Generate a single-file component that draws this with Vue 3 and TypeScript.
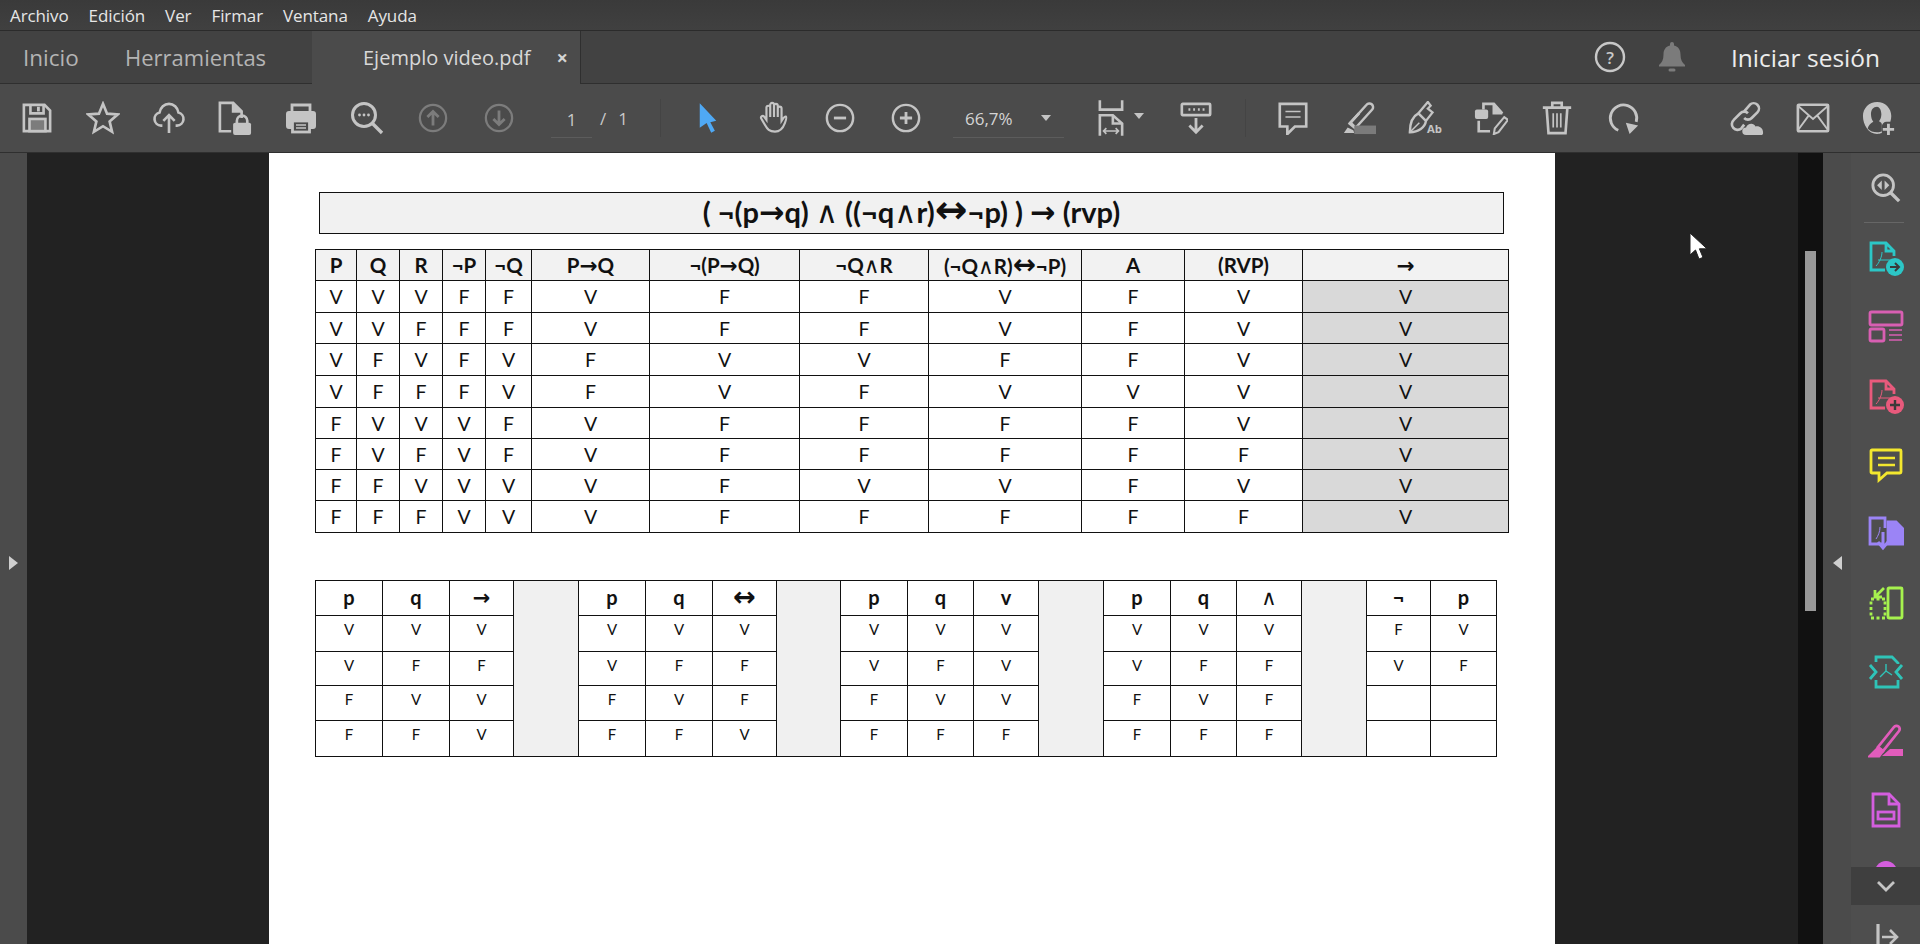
<script setup lang="ts">
const menus: string[] = ['Archivo', 'Edición', 'Ver', 'Firmar', 'Ventana', 'Ayuda']

interface Token { text: string; kind: string }
function tokens(s: string): Token[] {
  return s.split(/([→↔∧])/).filter((t) => t !== '').map((t) => ({
    text: t,
    kind: t === '∧' ? 'sym-and' : t === '→' ? 'sym-arrow' : t === '↔' ? 'sym-both' : 'plain'
  }))
}

const formula = '( ¬(p→q) ∧ ((¬q∧r)↔¬p) ) → (rvp)'

interface MainRow { cells: string[]; short: boolean }
const mainHead: string[] = ['P', 'Q', 'R', '¬P', '¬Q', 'P→Q', '¬(P→Q)', '¬Q∧R', '(¬Q∧R)↔¬P)', 'A', '(RVP)', '→']
const mainWidths: number[] = [41, 43, 43, 43, 46, 118, 150, 129, 153, 103, 118, 206]
const mainRows: MainRow[] = [
  { cells: 'V V V F F V F F V F V V'.split(' '), short: false },
  { cells: 'V V F F F V F F V F V V'.split(' '), short: true },
  { cells: 'V F V F V F V V F F V V'.split(' '), short: false },
  { cells: 'V F F F V F V F V V V V'.split(' '), short: false },
  { cells: 'F V V V F V F F F F V V'.split(' '), short: true },
  { cells: 'F V F V F V F F F F F V'.split(' '), short: true },
  { cells: 'F F V V V V F V V F V V'.split(' '), short: true },
  { cells: 'F F F V V V F F F F F V'.split(' '), short: false }
]

interface MiniTable { head: string[]; rows: string[][] }
const miniTables: MiniTable[] = [
  { head: ['p', 'q', '→'], rows: [['V', 'V', 'V'], ['V', 'F', 'F'], ['F', 'V', 'V'], ['F', 'F', 'V']] },
  { head: ['p', 'q', '↔'], rows: [['V', 'V', 'V'], ['V', 'F', 'F'], ['F', 'V', 'F'], ['F', 'F', 'V']] },
  { head: ['p', 'q', 'v'], rows: [['V', 'V', 'V'], ['V', 'F', 'V'], ['F', 'V', 'V'], ['F', 'F', 'F']] },
  { head: ['p', 'q', '∧'], rows: [['V', 'V', 'V'], ['V', 'F', 'F'], ['F', 'V', 'F'], ['F', 'F', 'F']] },
  { head: ['¬', 'p'], rows: [['F', 'V'], ['V', 'F'], ['', ''], ['', '']] }
]
const miniWidths: number[] = [67, 67, 64, 65, 67, 67, 64, 64, 67, 66, 65, 65, 67, 66, 65, 65, 64, 66]
const miniHeights: number[] = [36, 34, 35, 36]

function miniRow(i: number): string[] {
  const out: string[] = []
  miniTables.forEach((t) => out.push(...t.rows[i]))
  return out
}
</script>

<template>
  <div class="app">
    <header class="menubar">
      <span v-for="m in menus" :key="m" class="menu-item">{{ m }}</span>
    </header>

    <nav class="tabbar">
      <span class="tab-link tab-inicio">Inicio</span>
      <span class="tab-link tab-tools">Herramientas</span>
      <div class="tab-active">
        <span class="tab-title">Ejemplo video.pdf</span>
        <span class="tab-close">×</span>
      </div>
      <div class="tab-right">
        <svg class="help" viewBox="0 0 32 32" width="32" height="32">
          <circle cx="16" cy="16" r="14" fill="none" stroke="#c8c8c8" stroke-width="2.4" />
          <text x="16" y="22.5" text-anchor="middle" class="qmark">?</text>
        </svg>
        <svg class="bell" viewBox="0 0 28 32" width="28" height="32">
          <path d="M14 1a2 2 0 0 1 2 2v1.500c4.500 1 6.500 4.500 6.500 9 0 5 1.500 8 4.500 10.500v1.500H1v-1.500c3-2.500 4.500-5.500 4.500-10.500 0-4.500 2-8 6.500-9V3a2 2 0 0 1 2-2z" fill="#7b7b7b" />
          <rect x="10.500" y="27.500" width="7" height="3" rx="1.500" fill="#7b7b7b" />
        </svg>
        <span class="signin">Iniciar sesión</span>
      </div>
    </nav>

    <div class="toolbar">
      <div class="tool-group group-a">
        <span class="slot"><svg viewBox="0 0 32 32" class="ic"><path d="M2 2h22l6 6v22H2z" /><path d="M9 2v9h14V2" /><rect x="16" y="4" width="3" height="5" fill="#c4c4c4" stroke="none" /><rect x="8" y="17" width="17" height="13" fill="#7c7c7c" stroke="#c4c4c4" /></svg></span>
        <span class="slot"><svg viewBox="0 0 36 36" class="ic ic-l"><path d="M18 3l4.300 10.400 11.200.9-8.500 7.300 2.600 11L18 26.700 8.400 32.600l2.600-11-8.500-7.300 11.200-.9z" /></svg></span>
        <span class="slot"><svg viewBox="0 0 36 36" class="ic ic-l"><path d="M11 26H9.500a7 7 0 0 1-1.500-13.800C9 7 13 3 18 3s9 4 10 9.200A7 7 0 0 1 26.500 26H25" /><path d="M18 34V15M12 21l6-6 6 6" /></svg></span>
        <span class="slot"><svg viewBox="0 0 36 36" class="ic ic-l"><path d="M14 32H2V2h14l9 9v7" /><path d="M16 2v9h9" fill="#c4c4c4" /><rect x="16" y="23" width="19" height="13" rx="2" fill="#c4c4c4" stroke="none" /><path d="M20 24v-3a5.500 5.500 0 0 1 11 0v3" /></svg></span>
        <span class="slot"><svg viewBox="0 0 34 32" class="ic ic-l"><path d="M8 10V3h18v7" /><path d="M5 9h24a3 3 0 0 1 3 3v12a3 3 0 0 1-3 3h-3v-7H8v7H5a3 3 0 0 1-3-3V12a3 3 0 0 1 3-3z" fill="#c4c4c4" stroke="none" /><rect x="8.500" y="19" width="17" height="11" fill="none" /><path d="M12 23h10M12 26h10" stroke-width="1.600" /></svg></span>
        <span class="slot"><svg viewBox="0 0 34 34" class="ic ic-l"><circle cx="14" cy="14" r="11.500" stroke-width="3" /><path d="M22.500 22.500L32 32" stroke-width="3.400" /><circle cx="9.500" cy="14" r="1.400" fill="#c4c4c4" stroke="none" /><circle cx="14" cy="14" r="1.400" fill="#c4c4c4" stroke="none" /><circle cx="18.500" cy="14" r="1.400" fill="#c4c4c4" stroke="none" /></svg></span>
        <span class="slot"><svg viewBox="0 0 32 32" class="ic dim"><circle cx="16" cy="16" r="14" stroke-width="2.400" /><path d="M16 24V9M10 15l6-6 6 6" stroke-width="3" /></svg></span>
        <span class="slot"><svg viewBox="0 0 32 32" class="ic dim"><circle cx="16" cy="16" r="14" stroke-width="2.400" /><path d="M16 8v15M10 17l6 6 6-6" stroke-width="3" /></svg></span>
      </div>

      <div class="pager">
        <span class="page-input">1</span>
        <span class="page-slash">/</span>
        <span class="page-total">1</span>
      </div>
      <span class="vsep sep-one"></span>

      <div class="tool-group group-b">
        <span class="slot"><svg viewBox="0 0 24 34" class="arrow-cur"><path d="M3 1l18 19-6.500 1.500 5 9.500-4 2-5-10.500-7.500 5z" fill="#4fa9f5" /></svg></span>
        <span class="slot"><svg viewBox="0 0 34 36" class="ic ic-l hand"><path d="M10 21V8a2 2 0 0 1 4 0v10V5a2 2 0 0 1 4 0v13V6a2 2 0 0 1 4 0v12V9a2 2 0 0 1 4 0v13c2-3 3-5 4.500-4.500 1 .5.500 3-1 7-2 5.500-5 9-10.500 9-6 0-8-2.500-10.500-7l-4-7c-1-2 1.500-3.500 3-2z" transform="translate(-1 -1)" /></svg></span>
        <span class="slot"><svg viewBox="0 0 32 32" class="ic"><circle cx="16" cy="16" r="14" stroke-width="2.600" /><path d="M9.500 16h13" stroke-width="3" /></svg></span>
        <span class="slot"><svg viewBox="0 0 32 32" class="ic"><circle cx="16" cy="16" r="14" stroke-width="2.600" /><path d="M9.500 16h13M16 9.500v13" stroke-width="3" /></svg></span>
      </div>

      <div class="zoombox">
        <span class="zoom-val">66,7%</span>
        <span class="caret zoom-caret"></span>
      </div>

      <span class="slot slot-fit"><svg viewBox="0 0 28 38" class="fit"><path d="M2 0v10h24V0" /><path d="M2 38V16h14l10 9v13" /><path d="M16 16v9h10" /><path d="M6 33h16M9 30l-3 3 3 3M19 30l3 3-3 3" stroke-width="1.800" /></svg></span>
      <span class="caret fit-caret"></span>
      <span class="slot slot-read"><svg viewBox="0 0 34 36" class="ic ic-l"><rect x="2" y="3" width="30" height="12" rx="1" stroke-width="2.800" /><path d="M9 9h2M14 9h2M19 9h2M24 9h2" stroke-width="2.600" /><path d="M17 18v15M10 26l7 7 7-7" stroke-width="3" /></svg></span>
      <span class="vsep sep-two"></span>

      <div class="tool-group group-c">
        <span class="slot"><svg viewBox="0 0 34 36" class="ic ic-l"><path d="M3 3h28v24H19l-8 8v-8H3z" stroke-width="2.800" /><path d="M9 11h16M9 17h16" stroke-width="1.600" /></svg></span>
        <span class="slot"><svg viewBox="0 0 36 36" class="ic ic-l"><path d="M8 24L26 4a3 3 0 0 1 6 5L14 29z" stroke-width="2.600" /><path d="M9 23l5 5" /><path d="M2 34l4-6 6 3 1 3z" fill="#c4c4c4" stroke="none" /><rect x="13" y="26" width="23" height="9" fill="#7b7b7b" stroke="none" /><path d="M8 24L18 13" /></svg></span>
        <span class="slot"><svg viewBox="0 0 36 36" class="ic ic-l"><path d="M2 33c0-10 3-17 9-20l8 8c-1 7-8 12-17 12z" stroke-width="2.600" /><path d="M2 33l10-10" stroke-width="1.600" /><path d="M11 13L21 1l3 4-3 3 5 4-7 9" stroke-width="2.400" /><text x="20" y="34" class="mini-txt">Ab</text></svg></span>
        <span class="slot"><svg viewBox="0 0 36 36" class="ic ic-l"><path d="M5 21v11h12" /><path d="M10 9V3h11l9 10" /><path d="M21 3v10h9" fill="#c4c4c4" /><rect x="1" y="9" width="14" height="10" rx="2" fill="#c4c4c4" stroke="none" /><path d="M21 35l1-6 10-12 4 3-10 13z" stroke-width="2.200" /></svg></span>
        <span class="slot"><svg viewBox="0 0 32 36" class="ic ic-l"><path d="M1 7h30M11 7V2h10v5M5 7l2 27h18l2-27" stroke-width="2.800" /><path d="M12 13v15M16 13v15M20 13v15" stroke-width="1.800" /></svg></span>
        <span class="slot"><svg viewBox="0 0 34 36" class="ic ic-l"><path d="M12 31A14 14 0 1 1 31 22" stroke-width="3" /><path d="M20 23l13 3-9 9z" fill="#c4c4c4" stroke="none" /></svg></span>
      </div>

      <div class="tool-group group-d">
        <span class="slot"><svg viewBox="0 0 36 36" class="ic ic-l"><path d="M15 11l6-7a5.500 5.500 0 0 1 8 8l-6 6a5.500 5.500 0 0 1-8 0" stroke-width="2.800" /><path d="M19 13a5.500 5.500 0 0 0-8 0l-7 7a5.500 5.500 0 0 0 8 9l3-4" stroke-width="2.800" /><path d="M17 36a4 4 0 0 1 0-8c1-4 8-6 10-1 4-1 8 2 8 6a3 3 0 0 1-1 3z" fill="#c4c4c4" stroke="none" /></svg></span>
        <span class="slot"><svg viewBox="0 0 36 32" class="ic ic-l"><rect x="2" y="2" width="32" height="28" rx="1" stroke-width="2.800" /><path d="M2 3l16 14L34 3M2 29l11-15M34 29L23 14" stroke-width="2" /></svg></span>
        <span class="slot"><svg viewBox="0 0 36 36" class="ic ic-l"><path d="M16 1c8.500 0 15 6.500 15 15 0 2-.3 4-1 6h-4a5 5 0 0 0-5 5v7c-1.500.500-3.500 1-5 1C7 35 1 25.500 1 16 1 7.500 7.500 1 16 1z" fill="#c4c4c4" stroke="none" /><path d="M16 6c-4 0-6.500 3-6.500 8 0 3 1 6 2.500 8-3 1.500-5 4-6 7 2.500 3 6 4 10 4 2 0 3.500-.3 5-1V25c0-1.500-1-2.500-3-3.500 1.500-2 2.500-4.500 2.500-7.500 0-5-2.500-8-4.500-8z" fill="#4b4b4b" stroke="none" /><path d="M28 24v12M22 30h12" stroke-width="3" /></svg></span>
      </div>
    </div>

    <main class="viewer">
      <aside class="left-gutter"><span class="tri-right"></span></aside>

      <div class="canvas">
        <section class="page">
          <h1 class="formula"><span v-for="(t, i) in tokens(formula)" :key="i" :class="t.kind">{{ t.text }}</span></h1>

          <table class="truth">
            <colgroup><col v-for="(w, i) in mainWidths" :key="i" :style="{ width: w + 'px' }" /></colgroup>
            <thead>
              <tr class="thead-row">
                <th v-for="(h, i) in mainHead" :key="i"><span v-for="(t, k) in tokens(h)" :key="k" :class="t.kind">{{ t.text }}</span></th>
              </tr>
            </thead>
            <tbody>
              <tr v-for="(r, ri) in mainRows" :key="ri" :class="r.short ? 'row-short' : 'row-tall'">
                <td v-for="(c, ci) in r.cells" :key="ci" :class="{ shaded: ci === 11 }">{{ c }}</td>
              </tr>
            </tbody>
          </table>

          <table class="mini">
            <colgroup><col v-for="(w, i) in miniWidths" :key="i" :style="{ width: w + 'px' }" /></colgroup>
            <tbody>
              <tr class="mini-head">
                <template v-for="(t, ti) in miniTables" :key="ti">
                  <th v-for="(h, hi) in t.head" :key="hi"><span v-for="(p, k) in tokens(h)" :key="k" :class="p.kind">{{ p.text }}</span></th>
                  <td v-if="ti < miniTables.length - 1" rowspan="5" class="spacer"></td>
                </template>
              </tr>
              <tr v-for="(hgt, ri) in miniHeights" :key="ri" :style="{ height: hgt + 'px' }">
                <td v-for="(c, ci) in miniRow(ri)" :key="ci" class="mini-cell">{{ c }}</td>
              </tr>
            </tbody>
          </table>
        </section>

        <svg class="mouse" viewBox="0 0 20 30" width="20" height="30">
          <path d="M2 1v22l5.500-5 3.500 9 4-1.600-3.600-8.600H19z" fill="#fff" stroke="#222" stroke-width="1" />
        </svg>
      </div>

      <div class="scroll-track"><div class="scroll-thumb"></div></div>
      <aside class="right-gutter"><span class="tri-left"></span></aside>

      <aside class="sidebar">
        <span class="side-item first"><svg viewBox="0 0 32 32" class="ic"><circle cx="13" cy="13" r="11" stroke-width="3" /><path d="M21 21l9 9" stroke-width="3.600" /><path d="M11.500 8v10l-5-5zM14.500 8v10l5-5z" fill="#c4c4c4" stroke="none" /></svg></span>
        <span class="side-sep"></span>
        <span class="side-item"><svg viewBox="0 0 36 36" class="sic c-teal"><path d="M17 30H3V3h15l8 8v5M18 3v8h8" /><path d="M8 26c3-3 6-9 6-14M10 20h14" stroke-width="1" /><circle cx="27" cy="27" r="9" fill="#2cc6c6" stroke="none" /><path d="M22 27h9M27 23l4 4-4 4" stroke="#3a3a3a" stroke-width="2" /></svg></span>
        <span class="side-item"><svg viewBox="0 0 36 36" class="sic c-pink"><rect x="2" y="3" width="32" height="13" rx="1.500" /><rect x="2" y="20" width="14" height="12" rx="1.500" /><path d="M21 21h13M21 26h13M21 31h13" stroke-width="1.500" /></svg></span>
        <span class="side-item"><svg viewBox="0 0 36 36" class="sic c-rose"><path d="M17 30H3V3h15l8 8v5M18 3v8h8" /><path d="M8 26c3-3 6-9 6-14M10 20h14" stroke-width="1" /><circle cx="27" cy="27" r="9" fill="#e85a7c" stroke="none" /><path d="M22 27h10M27 22v10" stroke="#3a3a3a" stroke-width="2.400" /></svg></span>
        <span class="side-item"><svg viewBox="0 0 36 36" class="sic c-yellow"><path d="M4 3h28a1 1 0 0 1 1 1v21a1 1 0 0 1-1 1H19l-8 7v-7H4a1 1 0 0 1-1-1V4a1 1 0 0 1 1-1z" /><path d="M10 11h17M10 18h17" stroke-width="2.600" /></svg></span>
        <span class="side-item"><svg viewBox="0 0 36 36" class="sic c-violet"><path d="M14 28H2V2h15v10" /><path d="M8 23c2-3 4-7 4-12" stroke-width="1" /><path d="M20 6h8l7 7v15H20z" fill="#9b84f6" /><path d="M15 16v14M10 26l5 6 5-6" stroke-width="3" /></svg></span>
        <span class="side-item"><svg viewBox="0 0 36 36" class="sic c-green"><rect x="20" y="3" width="14" height="30" rx="1" /><path d="M3 14h14v19H3z" stroke-dasharray="3 2.500" /><path d="M16 3L7 12M7 5v7h7" /></svg></span>
        <span class="side-item"><svg viewBox="0 0 36 36" class="sic c-aqua"><path d="M8 8V3h16l6 6v1M8 26v7h22v-7" /><path d="M2 11l6 7-6 7M34 11l-6 7 6 7" /><path d="M18 10v7l-6 6M18 17l6 4" stroke-width="1.400" /></svg></span>
        <span class="side-item"><svg viewBox="0 0 36 36" class="sic c-fuchsia"><path d="M10 24L26 4a3 3 0 0 1 5 4L15 28z" /><path d="M2 33l8-8 5 3-4 5z" fill="#e25cbc" /><path d="M14 33l8-7h13v7z" fill="#e25cbc" stroke="none" /></svg></span>
        <span class="side-item"><svg viewBox="0 0 36 36" class="sic c-magenta"><path d="M5 2h16l10 10v22H5z" /><path d="M21 2v10h10" /><rect x="10" y="20" width="16" height="7" /></svg></span>
        <span class="side-clipped"><svg viewBox="0 0 36 6" width="36" height="6"><ellipse cx="18" cy="14" rx="12" ry="14" fill="#d45ede" /></svg></span>
        <div class="side-more"><svg viewBox="0 0 20 12" width="20" height="12"><path d="M2 2l8 8 8-8" fill="none" stroke="#c4c4c4" stroke-width="2.800" /></svg></div>
        <div class="side-exit"><svg viewBox="0 0 26 30" width="26" height="30"><path d="M5 2v26" stroke="#c4c4c4" stroke-width="3.200" fill="none" /><path d="M9 15h14M17 8l7 7-7 7" stroke="#c4c4c4" stroke-width="2.600" fill="none" /></svg></div>
      </aside>
    </main>
  </div>
</template>

<style>
html, body { margin: 0; padding: 0; background: #2a2a2a; overflow: hidden; }
</style>

<style scoped>
.app {
  width: 1920px;
  height: 944px;
  display: flex;
  flex-direction: column;
  overflow: hidden;
  font-family: "Open Sans", "Noto Sans", sans-serif;
  background: #2a2a2a;
}

.menubar {
  height: 30px;
  flex: none;
  display: flex;
  align-items: center;
  padding-left: 10px;
  gap: 20px;
  background: linear-gradient(#3a3a3a, #404040);
  border-bottom: 1px solid #2b2b2b;
  color: #e6e6e6;
  font-size: 17px;
  letter-spacing: -0.1px;
}

.tabbar {
  height: 52px;
  flex: none;
  display: flex;
  align-items: center;
  background: #424242;
  border-bottom: 1px solid #2f2f2f;
  font-size: 22.5px;
  color: #b4b4b4;
}
.tab-link { white-space: nowrap; }
.tab-inicio { width: 102px; margin-left: 23px; }
.tab-tools { width: 187px; font-size: 22px; }
.tab-active {
  width: 269px;
  height: 53px;
  margin-bottom: -1px;
  box-sizing: border-box;
  display: flex;
  align-items: center;
  padding-left: 51px;
  background: #4b4b4b;
  border-right: 1px solid #2f2f2f;
  color: #d8d8d8;
  font-size: 20px;
}
.tab-close { margin-left: 26px; font-size: 20px; font-weight: 700; color: #d4d4d4; }
.tab-right {
  margin-left: auto;
  display: flex;
  align-items: center;
  padding-right: 38px;
}
.qmark { font-size: 17px; font-weight: 600; fill: #c8c8c8; font-family: "Open Sans", sans-serif; }
.bell { margin-left: 32px; }
.signin { width: 151px; margin-left: 45px; color: #ececec; font-size: 24.500px; font-weight: 500; white-space: nowrap; }

.toolbar {
  height: 69px;
  flex: none;
  box-sizing: border-box;
  display: flex;
  align-items: center;
  padding-left: 4px;
  background: #4b4b4b;
  border-bottom: 1px solid #2f2f2f;
}
.tool-group { display: flex; align-items: center; }
.slot {
  width: 66px;
  height: 40px;
  flex: none;
  display: flex;
  align-items: center;
  justify-content: center;
}
.ic { width: 30px; height: 30px; fill: none; stroke: #c4c4c4; stroke-width: 2.800; }
.ic-l { width: 34px; height: 34px; }
.ic.dim { stroke: #7c7c7c; }
.ic.hand { stroke-width: 2.300; }
.arrow-cur { width: 22px; height: 34px; }
.fit { width: 26px; height: 36px; fill: none; stroke: #c4c4c4; stroke-width: 2.800; }
.mini-txt { font-size: 12px; font-weight: 700; fill: #c4c4c4; stroke: none; font-family: "Open Sans", sans-serif; }

.pager {
  margin-left: 19px;
  display: flex;
  align-items: center;
  color: #c9c9c9;
  font-size: 17px;
}
.page-input {
  width: 41px;
  height: 34px;
  line-height: 34px;
  text-align: center;
  border-bottom: 1px solid #5c5c5c;
  margin-top: 4px;
}
.page-slash { margin-left: 8px; }
.page-total { margin-left: 12px; }

.vsep { width: 1px; height: 38px; background: #444; flex: none; }
.sep-one { margin-left: 32px; }
.group-b { margin-left: 14px; }

.zoombox {
  margin-left: 14px;
  width: 111px;
  height: 38px;
  box-sizing: border-box;
  display: flex;
  align-items: center;
  border-bottom: 1px solid #5c5c5c;
  margin-top: 1px;
  color: #d4d4d4;
  font-size: 17px;
}
.zoom-val { margin-left: 12px; }
.caret {
  width: 0;
  height: 0;
  flex: none;
  border-left: 5px solid transparent;
  border-right: 5px solid transparent;
  border-top: 6px solid #c4c4c4;
}
.zoom-caret { margin-left: auto; margin-right: 13px; }
.slot-fit { margin-left: 14px; }
.fit-caret { margin-left: -10px; margin-top: -4px; }
.slot-read { margin-left: 19px; }
.sep-two { margin-left: 16px; }
.group-c { margin-left: 14px; }
.group-d { margin-left: 58px; }

.viewer { flex: 1; min-height: 0; display: flex; position: relative; }
.left-gutter {
  width: 27px;
  flex: none;
  display: flex;
  align-items: center;
  justify-content: center;
  background: #4b4b4b;
}
.tri-right {
  width: 0; height: 0;
  border-top: 7px solid transparent;
  border-bottom: 7px solid transparent;
  border-left: 9px solid #cfcfcf;
  margin-top: 28px;
}
.tri-left {
  width: 0; height: 0;
  border-top: 7px solid transparent;
  border-bottom: 7px solid transparent;
  border-right: 9px solid #cfcfcf;
  margin-top: 28px;
}
.canvas {
  flex: 1;
  min-width: 0;
  background: #222;
  display: flex;
  padding-left: 242px;
  position: relative;
  overflow: hidden;
}
.page {
  width: 1286px;
  flex: none;
  box-sizing: border-box;
  background: #fff;
  padding: 39px 0 0 46px;
  font-family: Lato, "Open Sans", "DejaVu Sans", sans-serif;
  color: #111;
}
.formula {
  margin: 0 0 15px 4px;
  width: 1185px;
  height: 42px;
  box-sizing: border-box;
  border: 1px solid #111;
  background: #f1f1f1;
  text-align: center;
  font-size: 29px;
  line-height: 38px;
  font-weight: 700;
  color: #111;
  white-space: nowrap;
}
.sym-arrow { font-family: "DejaVu Sans", sans-serif; font-weight: 700; font-size: 1.05em; line-height: 1; }
.sym-both { font-family: "DejaVu Sans", sans-serif; font-weight: 700; font-size: 1.35em; line-height: 1; }
.sym-and { font-family: "DejaVu Sans", sans-serif; font-weight: 400; font-size: 1.05em; line-height: 1; }
.formula span { line-height: 0; }

.truth, .mini { border-collapse: collapse; table-layout: fixed; }
.truth { width: 1193px; font-size: 19.500px; }
.truth th, .truth td, .mini th, .mini td {
  border: 1px solid #111;
  padding: 0;
  text-align: center;
  vertical-align: middle;
  white-space: nowrap;
}
.truth th { background: #f2f2f2; font-size: 20.500px; font-weight: 700; line-height: 26px; }
.thead-row { height: 31px; }
.row-tall { height: 32px; }
.row-short { height: 31px; }
.truth td.shaded { background: #d9d9d9; }

.mini { width: 1182px; margin-top: 47px; font-size: 15px; }
.mini-head { height: 35px; }
.mini th { font-size: 20px; font-weight: 700; line-height: 26px; padding-bottom: 3px; }
.mini .mini-cell { vertical-align: top; padding-top: 4px; }
.mini td.spacer { background: #f0f0f0; }

.mouse { position: absolute; left: 1661px; top: 79px; }

.scroll-track {
  width: 25px;
  flex: none;
  background: #111;
  position: relative;
}
.scroll-thumb {
  position: absolute;
  left: 7px;
  top: 98px;
  width: 11px;
  height: 360px;
  background: #999;
}
.right-gutter {
  width: 28px;
  flex: none;
  display: flex;
  align-items: center;
  justify-content: center;
  background: #4b4b4b;
}
.sidebar {
  width: 69px;
  flex: none;
  display: flex;
  flex-direction: column;
  align-items: stretch;
  background: #4e4e4e;
  overflow: hidden;
}
.side-item {
  height: 69px;
  flex: none;
  display: flex;
  align-items: center;
  justify-content: center;
}
.side-sep { height: 1px; flex: none; margin: 0 16px 0 13px; background: #666; }
.sic { width: 36px; height: 36px; fill: none; stroke-width: 2.800; }
.c-teal { stroke: #2cc6c6; }
.c-pink { stroke: #d85fb2; }
.c-rose { stroke: #e85a7c; }
.c-yellow { stroke: #f3e72e; }
.c-violet { stroke: #9b84f6; }
.c-green { stroke: #a6f24e; }
.c-aqua { stroke: #2fc4b8; }
.c-fuchsia { stroke: #e25cbc; }
.c-magenta { stroke: #d45ede; }
.side-clipped { height: 23px; display: flex; justify-content: center; align-items: flex-end; flex: none; }
.side-clipped svg { display: block; }
.side-more {
  height: 38px;
  flex: none;
  display: flex;
  align-items: center;
  justify-content: center;
  background: #3f3f3f;
}
.side-exit { flex: 1; display: flex; justify-content: center; padding-top: 17px; }
</style>
